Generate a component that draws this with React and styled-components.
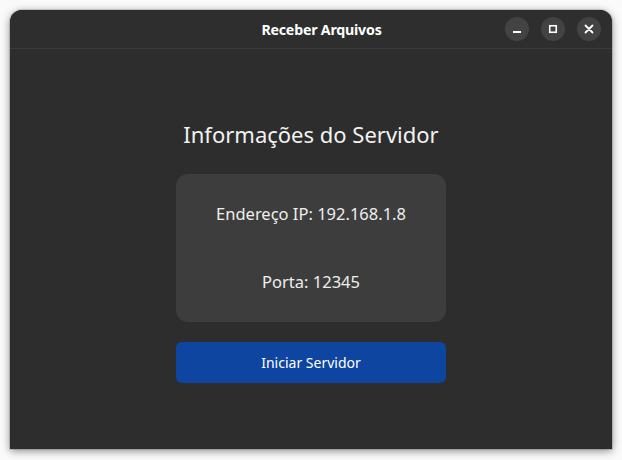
import React from 'react';
import styled, { createGlobalStyle } from 'styled-components';

// ========================== STYLES:BEGIN ========================== //
const GlobalStyle = createGlobalStyle`
  html, body {
    margin: 0;
    padding: 0;
    background: #ffffff;
    font-family: 'Noto Sans', 'Open Sans', sans-serif;
  }
`;

const Desktop = styled.div`
  width: 622px;
  height: 460px;
  padding: 10px 10px 11px 10px;
  box-sizing: border-box;
  background: #fafafa;
`;

const Window = styled.div`
  height: 100%;
  display: flex;
  flex-direction: column;
  background: #2d2d2d;
  border-radius: 12px 12px 0 0;
  box-shadow: 0 2px 8px rgba(0, 0, 0, 0.45), 0 0 0 1px rgba(0, 0, 0, 0.12);
  overflow: hidden;
`;

const HeaderBar = styled.header`
  height: 38px;
  flex-shrink: 0;
  display: grid;
  grid-template-columns: 1fr auto 1fr;
  align-items: center;
  padding: 0 11px 0 12px;
  background: #2e2e2e;
  border-bottom: 1px solid #3a3a3a;
`;

const Title = styled.h1`
  grid-column: 2;
  margin: 0 0 0 20px;
  font-size: 14.2px;
  font-weight: 700;
  color: #ffffff;
  letter-spacing: -0.2px;
`;

const Controls = styled.div`
  grid-column: 3;
  justify-self: end;
  display: flex;
  gap: 12px;
`;

const ControlButton = styled.button`
  width: 24px;
  height: 24px;
  border: none;
  border-radius: 50%;
  padding: 0;
  background: #434343;
  color: #ffffff;
  display: flex;
  align-items: center;
  justify-content: center;
`;

const Content = styled.main`
  flex: 1;
  display: flex;
  flex-direction: column;
  align-items: center;
  padding-top: 69px;
`;

const Heading = styled.h2`
  margin: 0;
  font-size: 22px;
  font-weight: 400;
  color: #f2f2f2;
  line-height: 32px;
`;

const InfoCard = styled.section`
  margin-top: 24px;
  width: 270px;
  height: 148px;
  box-sizing: border-box;
  padding: 28px 0;
  background: #3d3d3d;
  border-radius: 12px;
  display: flex;
  flex-direction: column;
  justify-content: space-between;
  align-items: center;
`;

const InfoLine = styled.p`
  margin: 0;
  font-size: 16.5px;
  line-height: 24px;
  color: #eeeeee;
`;

const PrimaryButton = styled.button`
  margin-top: 20px;
  width: 270px;
  height: 41px;
  border: none;
  border-radius: 6px;
  background: #0e45a0;
  color: #ffffff;
  font-family: inherit;
  font-size: 14px;
`;
// ========================== STYLES:END ========================== //

const MinimizeIcon = () => (
  <svg width="10" height="10" viewBox="0 0 10 10">
    <rect x="1" y="7" width="8" height="2" fill="currentColor" />
  </svg>
);

const MaximizeIcon = () => (
  <svg width="10" height="10" viewBox="0 0 10 10">
    <rect x="1.75" y="1.75" width="6.5" height="6.5" fill="none" stroke="currentColor" strokeWidth="1.6" />
  </svg>
);

const CloseIcon = () => (
  <svg width="10" height="10" viewBox="0 0 10 10">
    <path d="M1.5 1.5 L8.5 8.5 M8.5 1.5 L1.5 8.5" stroke="currentColor" strokeWidth="1.8" strokeLinecap="round" />
  </svg>
);

const App = () => {
  return (
    <>
      <GlobalStyle />
      <Desktop>
        <Window>
          <HeaderBar>
            <Title>Receber Arquivos</Title>
            <Controls>
              <ControlButton aria-label="Minimizar"><MinimizeIcon /></ControlButton>
              <ControlButton aria-label="Maximizar"><MaximizeIcon /></ControlButton>
              <ControlButton aria-label="Fechar"><CloseIcon /></ControlButton>
            </Controls>
          </HeaderBar>
          <Content>
            <Heading>Informações do Servidor</Heading>
            <InfoCard>
              <InfoLine>Endereço IP: 192.168.1.8</InfoLine>
              <InfoLine>Porta: 12345</InfoLine>
            </InfoCard>
            <PrimaryButton>Iniciar Servidor</PrimaryButton>
          </Content>
        </Window>
      </Desktop>
    </>
  );
};

export default App;
